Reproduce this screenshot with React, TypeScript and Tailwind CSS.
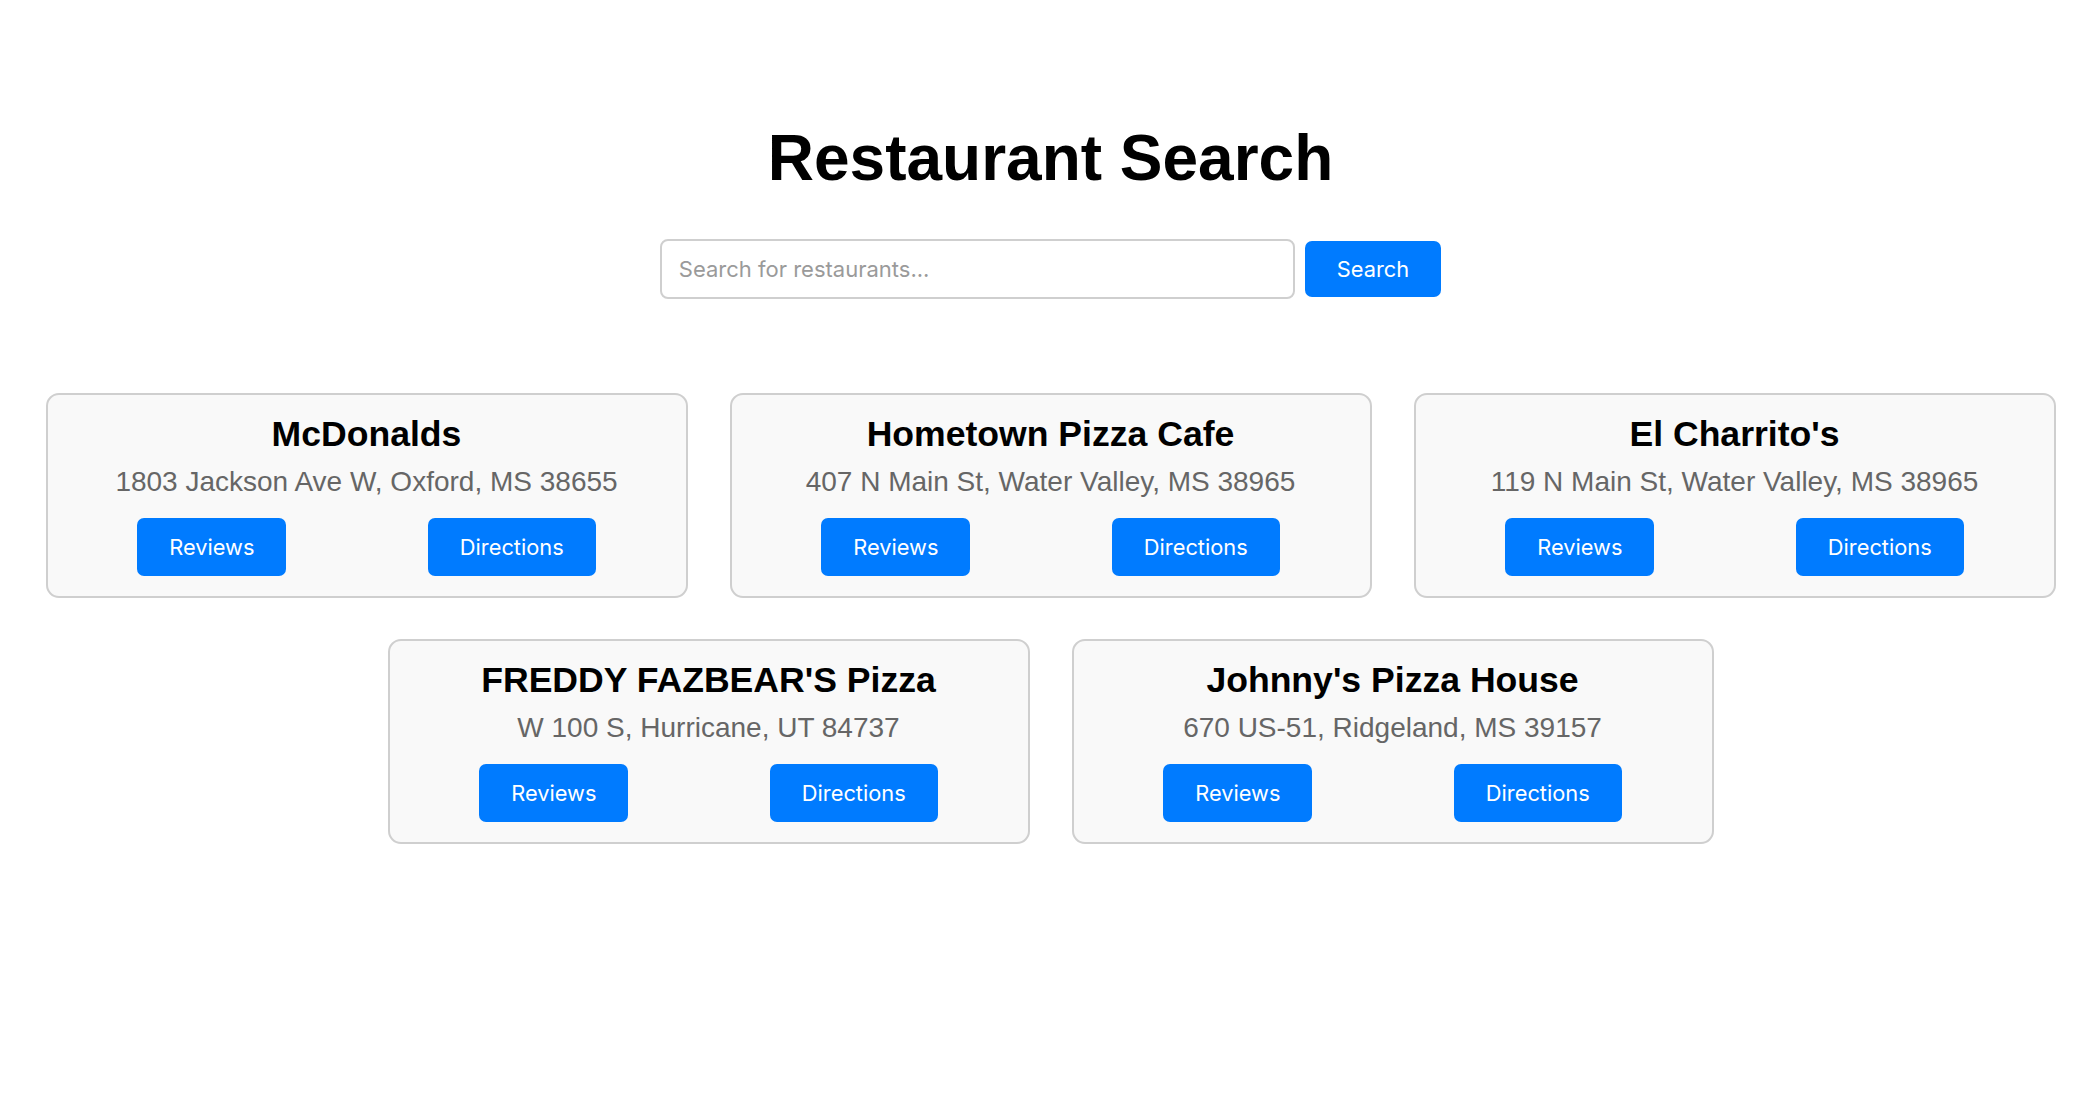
import React, { useState } from "react";

const restaurants = [
  { name: "McDonalds", address: "1803 Jackson Ave W, Oxford, MS 38655" },
  { name: "Hometown Pizza Cafe", address: "407 N Main St, Water Valley, MS 38965" },
  { name: "El Charrito's", address: "119 N Main St, Water Valley, MS 38965" },
  { name: "FREDDY FAZBEAR'S Pizza", address: "W 100 S, Hurricane, UT 84737" },
  { name: "Johnny's Pizza House", address: "670 US-51, Ridgeland, MS 39157" },
];

const btn =
  "bg-[#007bff] text-white rounded-[7px] px-[32px] font-['Inter',sans-serif] text-[21.8px] leading-[26px] hover:bg-[#0069d9]";

const App = () => {
  const [query, setQuery] = useState("");

  return (
    <div className="min-h-screen bg-white pl-[5px] pt-[121px] font-['Liberation_Sans',Arial,sans-serif]">
      <h1 className="text-center text-[64px] leading-[74px] font-bold text-black">
        Restaurant Search
      </h1>

      {/* Search bar */}
      <div className="mt-[44px] flex items-center justify-center gap-[10px]">
        <input
          value={query}
          onChange={(e) => setQuery(e.target.value)}
          placeholder="Search for restaurants..."
          className="w-[635px] h-[60px] rounded-[8px] border-2 border-[#cfcfcf] bg-white px-[17px] font-['Inter',sans-serif] text-[22px] text-[#333] outline-none placeholder:text-[#9a9a9a]"
        />
        <button className={`${btn} h-[56px]`}>Search</button>
      </div>

      {/* Results */}
      <div className="mt-[94px] mx-auto max-w-[2010px] flex flex-wrap justify-center gap-x-[42px] gap-y-[41px]">
        {restaurants.map((r) => (
          <div
            key={r.name}
            className="w-[642px] rounded-[13px] border-2 border-[#cfcfcf] bg-[#f9f9f9] px-[19px] pt-[19px] pb-[20px] text-center"
          >
            <h2 className="text-[35.6px] leading-[41px] font-bold text-black">
              {r.name}
            </h2>
            <p className="mt-[11px] text-[28px] leading-[32px] text-[#666]">
              {r.address}
            </p>
            <div className="mt-[20px] flex justify-around">
              <button className={`${btn} h-[58px]`}>Reviews</button>
              <button className={`${btn} h-[58px]`}>Directions</button>
            </div>
          </div>
        ))}
      </div>
    </div>
  );
};

export default App;
